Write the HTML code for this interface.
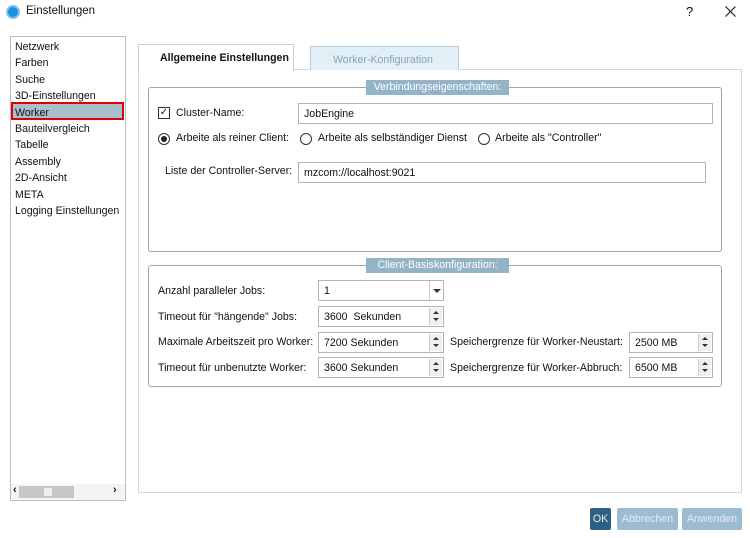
<!DOCTYPE html>
<html><head><style>
*{box-sizing:border-box;margin:0;padding:0}
body{width:750px;height:538px;background:#fff;font-family:"Liberation Sans",sans-serif;font-size:10.6px;color:#111;position:relative;overflow:hidden}
.a{position:absolute;white-space:nowrap}
.inp{position:absolute;border:1px solid #b4b4b4;background:#fff;padding-left:5px;line-height:20px;height:21px}
.spin{position:absolute;right:1px;top:1px;width:13px;height:17px;border-left:1px solid #ccc;background:#f0f0f0}
.spin:before{content:"";position:absolute;left:3px;top:3px;border:3px solid transparent;border-bottom:3px solid #333;border-top:0}
.spin:after{content:"";position:absolute;left:3px;top:10px;border:3px solid transparent;border-top:3px solid #333;border-bottom:0}
.grp{position:absolute;border:1px solid #8fa9bb;border-radius:3px}
.leg{position:absolute;background:#93b3c6;color:#fff;text-align:center;line-height:15px;height:15px}
.rad{position:absolute;width:12px;height:12px;border:1px solid #333;border-radius:50%;background:#fff}
.btn{position:absolute;top:508px;height:22px;line-height:22px;text-align:center;color:#e3edf4;background:#9dbbd0;border-radius:2px;font-size:10.6px}
</style></head><body>
<div class="a" style="left:6px;top:5px;width:14px;height:14px;border-radius:50%;background:#1e90e0;border:2px solid #7cc3f0"></div>
<div class="a" style="left:26px;top:5px;font-size:11.5px">Einstellungen</div>
<div class="a" style="left:686px;top:4px;font-size:13px">?</div>
<svg class="a" style="left:725px;top:6px" width="11" height="11"><path d="M0.5 0.5L10.5 10.5M10.5 0.5L0.5 10.5" stroke="#222" stroke-width="1.2"/></svg>

<div class="a" style="left:10px;top:36px;width:116px;height:465px;border:1px solid #bbb"></div>
<div class="a" style="left:11px;top:102px;width:113px;height:18px;background:#a9bfcb;border:2px solid #e00000"></div>
<div class="a" style="left:15px;top:39px;line-height:16.4px">Netzwerk<br>Farben<br>Suche<br>3D-Einstellungen<br>Worker<br>Bauteilvergleich<br>Tabelle<br>Assembly<br>2D-Ansicht<br>META<br>Logging Einstellungen</div>
<div class="a" style="left:11px;top:484px;width:114px;height:16px;background:#f4f4f4"></div>
<div class="a" style="left:19px;top:486px;width:55px;height:12px;background:#c8c8c8"></div>
<div class="a" style="left:44px;top:488px;width:8px;height:8px;background:#eee"></div>
<div class="a" style="left:13px;top:484px;font-size:11px;font-weight:bold">‹</div>
<div class="a" style="left:113px;top:484px;font-size:11px;font-weight:bold">›</div>

<div class="a" style="left:138px;top:69px;width:604px;height:424px;border:1px solid #d6d6d6"></div>
<div class="a" style="left:138px;top:44px;width:156px;height:27px;border:1px solid #ccc;border-bottom:none;background:#fff;font-weight:bold;padding:7px 0 0 21px">Allgemeine Einstellungen</div>
<div class="a" style="left:310px;top:46px;width:149px;height:24px;border:1px solid #b6ccd8;border-bottom:none;background:#e1eff6;color:#8aa3b2;padding:7px 0 0 22px">Worker-Konfiguration</div>

<div class="grp" style="left:148px;top:87px;width:574px;height:165px"></div>
<div class="leg" style="left:366px;top:80px;width:143px">Verbindungseigenschaften:</div>
<div class="a" style="left:158px;top:107px;width:12px;height:12px;border:1px solid #333;font-size:10px;line-height:10px;text-align:center">✓</div>
<div class="a" style="left:176px;top:107px">Cluster-Name:</div>
<div class="inp" style="left:298px;top:103px;width:415px">JobEngine</div>
<div class="rad" style="left:158px;top:133px"><div style="position:absolute;left:2px;top:2px;width:6px;height:6px;border-radius:50%;background:#222"></div></div>
<div class="a" style="left:176px;top:132px">Arbeite als reiner Client:</div>
<div class="rad" style="left:300px;top:133px"></div>
<div class="a" style="left:318px;top:132px">Arbeite als selbständiger Dienst</div>
<div class="rad" style="left:478px;top:133px"></div>
<div class="a" style="left:495px;top:132px">Arbeite als "Controller"</div>
<div class="a" style="left:165px;top:165px">Liste der Controller-Server:</div>
<div class="inp" style="left:298px;top:162px;width:408px">mzcom://localhost:9021</div>

<div class="grp" style="left:148px;top:265px;width:574px;height:122px"></div>
<div class="leg" style="left:366px;top:258px;width:143px">Client-Basiskonfiguration:</div>
<div class="a" style="left:158px;top:285px">Anzahl paralleler Jobs:</div>
<div class="inp" style="left:318px;top:280px;width:126px">1<div class="a" style="right:0;top:0;width:14px;height:19px;border-left:1px solid #ccc"><div style="position:absolute;left:3px;top:8px;border:4px solid transparent;border-top:4px solid #333;border-bottom:0"></div></div></div>
<div class="a" style="left:158px;top:311px">Timeout für "hängende" Jobs:</div>
<div class="inp" style="left:318px;top:306px;width:126px">3600&nbsp; Sekunden<div class="spin"></div></div>
<div class="a" style="left:158px;top:336px">Maximale Arbeitszeit pro Worker:</div>
<div class="inp" style="left:318px;top:332px;width:126px">7200 Sekunden<div class="spin"></div></div>
<div class="a" style="left:158px;top:362px">Timeout für unbenutzte Worker:</div>
<div class="inp" style="left:318px;top:357px;width:126px">3600 Sekunden<div class="spin"></div></div>
<div class="a" style="left:450px;top:336px">Speichergrenze für Worker-Neustart:</div>
<div class="inp" style="left:629px;top:332px;width:84px">2500 MB<div class="spin"></div></div>
<div class="a" style="left:450px;top:362px">Speichergrenze für Worker-Abbruch:</div>
<div class="inp" style="left:629px;top:357px;width:84px">6500 MB<div class="spin"></div></div>

<div class="btn" style="left:590px;width:21px;background:#2d5f80;color:#e8f0f6">OK</div>
<div class="btn" style="left:617px;width:61px">Abbrechen</div>
<div class="btn" style="left:682px;width:60px">Anwenden</div>
</body></html>
